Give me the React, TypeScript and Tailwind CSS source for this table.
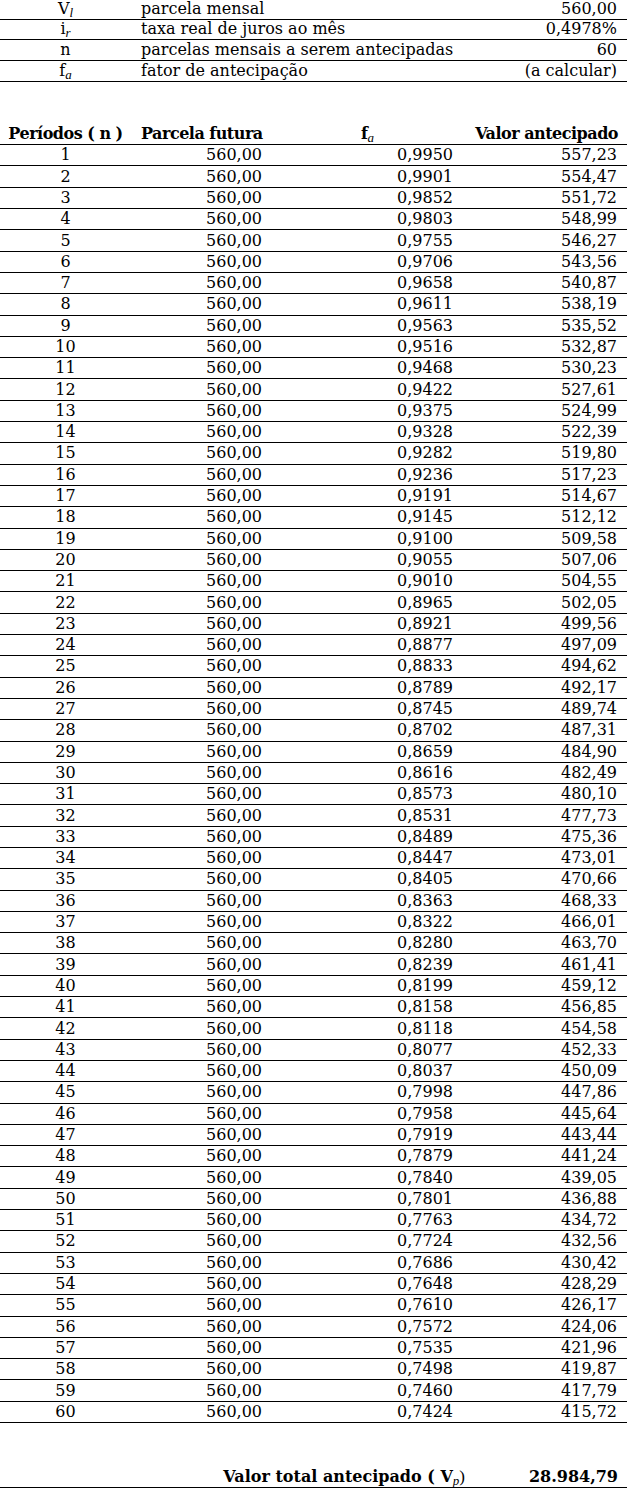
import React from "react";

const data: [string, string][] = [
  ["0,9950", "557,23"], ["0,9901", "554,47"], ["0,9852", "551,72"], ["0,9803", "548,99"], ["0,9755", "546,27"],
  ["0,9706", "543,56"], ["0,9658", "540,87"], ["0,9611", "538,19"], ["0,9563", "535,52"], ["0,9516", "532,87"],
  ["0,9468", "530,23"], ["0,9422", "527,61"], ["0,9375", "524,99"], ["0,9328", "522,39"], ["0,9282", "519,80"],
  ["0,9236", "517,23"], ["0,9191", "514,67"], ["0,9145", "512,12"], ["0,9100", "509,58"], ["0,9055", "507,06"],
  ["0,9010", "504,55"], ["0,8965", "502,05"], ["0,8921", "499,56"], ["0,8877", "497,09"], ["0,8833", "494,62"],
  ["0,8789", "492,17"], ["0,8745", "489,74"], ["0,8702", "487,31"], ["0,8659", "484,90"], ["0,8616", "482,49"],
  ["0,8573", "480,10"], ["0,8531", "477,73"], ["0,8489", "475,36"], ["0,8447", "473,01"], ["0,8405", "470,66"],
  ["0,8363", "468,33"], ["0,8322", "466,01"], ["0,8280", "463,70"], ["0,8239", "461,41"], ["0,8199", "459,12"],
  ["0,8158", "456,85"], ["0,8118", "454,58"], ["0,8077", "452,33"], ["0,8037", "450,09"], ["0,7998", "447,86"],
  ["0,7958", "445,64"], ["0,7919", "443,44"], ["0,7879", "441,24"], ["0,7840", "439,05"], ["0,7801", "436,88"],
  ["0,7763", "434,72"], ["0,7724", "432,56"], ["0,7686", "430,42"], ["0,7648", "428,29"], ["0,7610", "426,17"],
  ["0,7572", "424,06"], ["0,7535", "421,96"], ["0,7498", "419,87"], ["0,7460", "417,79"], ["0,7424", "415,72"],
];

function Sub({ children }: { children: React.ReactNode }) {
  return (
    <span className="italic text-[13px] relative top-[3px] font-normal tracking-normal font-['Liberation_Serif',serif]">
      {children}
    </span>
  );
}

const top: [React.ReactNode, string, string][] = [
  [<>V<Sub>l</Sub></>, "parcela mensal", "560,00"],
  [<>i<Sub>r</Sub></>, "taxa real de juros ao mês", "0,4978%"],
  ["n", "parcelas mensais a serem antecipadas", "60"],
  [<>f<Sub>a</Sub></>, "fator de antecipação", "(a calcular)"],
];

export default function App() {
  return (
    <div className="w-[627px] bg-white text-black text-[16px] leading-none font-['DejaVu_Serif',serif]">
      <div>
        {top.map((r, i) => (
          <div
            key={i}
            className={`grid grid-cols-[131px_1fr_auto] items-center border-b border-black ${i === 0 ? "h-[19.5px]" : "h-[20.8px]"}`}
          >
            <div className="text-center">{r[0]}</div>
            <div className="pl-[10px]">{r[1]}</div>
            <div className="pr-[10px] text-right">{r[2]}</div>
          </div>
        ))}
      </div>

      <div className="mt-[42px]">
        <div className="grid grid-cols-[131px_141px_191px_164px] items-center h-[21.3px] border-b border-black font-bold tracking-[-0.5px]">
          <div className="text-center">Períodos ( n )</div>
          <div className="pl-[10px]">Parcela futura</div>
          <div className="text-center">
            f<Sub>a</Sub>
          </div>
          <div className="pr-[9px] text-right">Valor antecipado</div>
        </div>
        {data.map((d, i) => (
          <div
            key={i}
            className="grid grid-cols-[131px_141px_191px_164px] items-center h-[21.3px] border-b border-black"
          >
            <div className="text-center">{i + 1}</div>
            <div className="pr-[10px] text-right">560,00</div>
            <div className="pr-[10px] text-right">{d[0]}</div>
            <div className="pr-[10px] text-right">{d[1]}</div>
          </div>
        ))}
      </div>

      <div className="mt-[43px] grid grid-cols-[465px_162px] items-center h-[22px] border-b border-black font-bold">
        <div className="text-right">
          Valor total antecipado ( V<Sub>p</Sub>
          <span className="font-normal font-['Liberation_Serif',serif] text-[17px]">)</span>
        </div>
        <div className="pr-[9px] text-right">28.984,79</div>
      </div>
    </div>
  );
}
